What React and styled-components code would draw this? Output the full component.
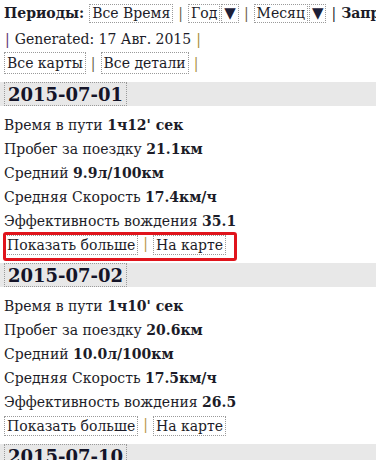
import React from "react";
import styled, { createGlobalStyle } from "styled-components";

const Global = createGlobalStyle`
  html, body { margin: 0; padding: 0; background: #fff; overflow: hidden; }
  body {
    font-family: "DejaVu Serif", "Liberation Serif", serif;
    font-size: 14px;
    color: #1c1c28;
  }
`;

const Page = styled.div`
  width: 376px;
  overflow: hidden;
  padding-top: 4px;
  white-space: nowrap;
`;

const Line = styled.div`
  display: flex;
  align-items: center;
  white-space: nowrap;
  height: ${(p) => p.$h || 22}px;
  margin-top: ${(p) => p.$mt || 0}px;
  padding-left: ${(p) => p.$pl ?? 4}px;
  gap: 5px;
`;

const Label = styled.span`
  font-weight: bold;
  flex-shrink: 0;
`;

const Box = styled.span`
  display: inline-flex;
  align-items: center;
  flex-shrink: 0;
  box-sizing: border-box;
  border: 1px dotted #9a9a9a;
  padding: 0 2px;
  height: ${(p) => p.$h || 19}px;
  line-height: 1;
`;

const Arrow = styled(Box)`
  font-size: 15px;
  color: #1d2038;
  padding: 0 2px;
  margin-left: -4px;
`;

const Pipe = styled.span`
  flex-shrink: 0;
  color: ${(p) => p.$c || "#6b6048"};
`;

const Header = styled.div`
  background: #e8e8e8;
  height: 24px;
  padding-left: 4px;
  display: flex;
  align-items: stretch;
`;

const DateBox = styled.span`
  display: inline-flex;
  align-items: center;
  border: 1px dotted #9a9a9a;
  padding: 0 3px;
  font-weight: bold;
  font-size: 18px;
  color: #141428;
`;

const Section = styled.section`
  display: flex;
  flex-direction: column;
`;

const Rows = styled.div`
  padding: 7px 0 0 4px;
  display: flex;
  flex-direction: column;
`;

const Row = styled.div`
  height: 24px;
  line-height: 24px;
  white-space: nowrap;
`;

const Links = styled.div`
  position: relative;
  margin: 2px 0 0 4px;
  height: 28px;
  display: flex;
  align-items: flex-start;
  gap: 5px;
`;

const Highlight = styled.div`
  position: absolute;
  left: -1px;
  top: -3px;
  width: 234px;
  height: 29px;
  box-sizing: border-box;
  border: 3px solid #e0141c;
  border-radius: 3px;
  pointer-events: none;
`;

const LinkBox = styled(Box)`
  height: 20px;
`;

const Spacer = styled.div`
  height: ${(p) => p.$h}px;
`;

const trips = [
  { date: "2015-07-01", time: "1ч12' сек", dist: "21.1км", avg: "9.9л/100км", speed: "17.4км/ч", eff: "35.1", hl: true },
  { date: "2015-07-02", time: "1ч10' сек", dist: "20.6км", avg: "10.0л/100км", speed: "17.5км/ч", eff: "26.5" },
  { date: "2015-07-10", time: "0ч58' сек", dist: "18.2км", avg: "9.7л/100км", speed: "18.8км/ч", eff: "30.2" },
];

export default function App() {
  return (
    <Page>
      <Global />
      <Line $h={18}>
        <Label>Периоды:</Label>
        <Box $h={19}>Все Время</Box>
        <Pipe>|</Pipe>
        <Box $h={19}>Год</Box>
        <Arrow $h={19}>▼</Arrow>
        <Pipe>|</Pipe>
        <Box $h={19}>Месяц</Box>
        <Arrow $h={19}>▼</Arrow>
        <Pipe $c="#1c1c28">|</Pipe>
        <Label>Запросы</Label>
      </Line>
      <Line $h={22} $mt={6} $pl={5}>
        <Pipe $c="#5a3070">|</Pipe>
        <span>Generated: 17 Авг. 2015</span>
        <Pipe $c="#a88a3a">|</Pipe>
      </Line>
      <Line $h={22} $mt={2}>
        <Box $h={22}>Все карты</Box>
        <Pipe>|</Pipe>
        <Box $h={22}>Все детали</Box>
        <Pipe $c="#a88a3a">|</Pipe>
      </Line>
      <Spacer $h={8} />
      {trips.map((t) => (
        <Section key={t.date}>
          <Header>
            <DateBox>{t.date}</DateBox>
          </Header>
          <Rows>
            <Row>Время в пути <b>{t.time}</b></Row>
            <Row>Пробег за поездку <b>{t.dist}</b></Row>
            <Row>Средний <b>{t.avg}</b></Row>
            <Row>Средняя Скорость <b>{t.speed}</b></Row>
            <Row>Эффективность вождения <b>{t.eff}</b></Row>
          </Rows>
          <Links>
            <LinkBox>Показать больше</LinkBox>
            <Pipe $c="#b8944a">|</Pipe>
            <LinkBox>На карте</LinkBox>
            {t.hl && <Highlight />}
          </Links>
        </Section>
      ))}
    </Page>
  );
}
